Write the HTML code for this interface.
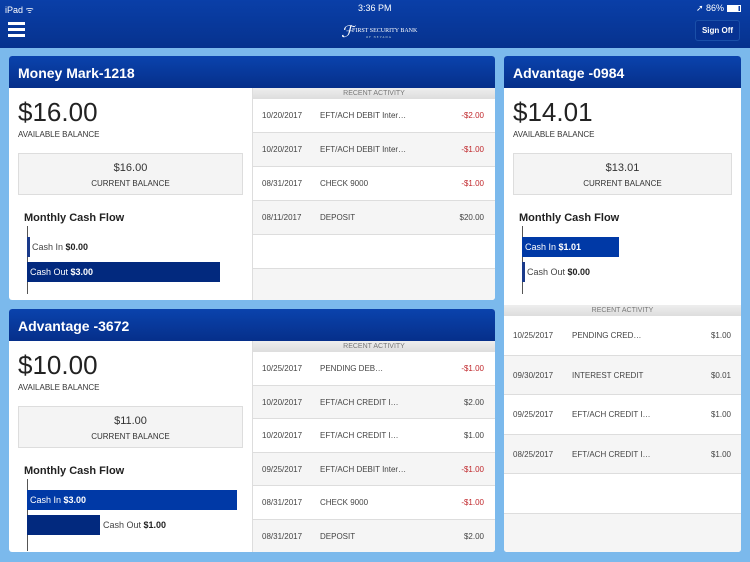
<!DOCTYPE html><html><head><style>
*{margin:0;padding:0;box-sizing:border-box}
body{width:750px;height:562px;overflow:hidden;background:#7bb9ec;font-family:"Liberation Sans",sans-serif;position:relative;color:#333}
.top{position:absolute;left:0;top:0;width:750px;height:48px;background:linear-gradient(#0a3fa8,#06328e)}
.abs{position:absolute}
.card{position:absolute;background:#fff;border-radius:3px;overflow:hidden}
.ttl{position:absolute;left:0;top:0;right:0;height:32px;background:linear-gradient(#0a43ad,#062f8a);color:#fff;font-size:14px;font-weight:bold;padding:9px 0 0 9px}
.big{position:absolute;font-size:26px;color:#222}
.lbl{position:absolute;font-size:8px;color:#333}
.cb{position:absolute;background:#f4f4f4;border:1px solid #ddd;text-align:center;font-size:11px;color:#333}
.cb div{font-size:8px;margin-top:5px}
.mcf{position:absolute;font-size:11px;font-weight:bold;color:#222}
.axis{position:absolute;width:1px;background:#555}
.bar{position:absolute;height:20px;font-size:9px;color:#fff;padding:5px 0 0 3px;white-space:nowrap}
.bar b{font-weight:bold}
.act{position:absolute;border-left:1px solid #ddd;background:#f5f5f5}
.ah{height:11px;background:linear-gradient(#eee,#ddd);font-size:7px;color:#777;text-align:center;line-height:11px}
.row{position:relative;border-bottom:1px solid #ddd;font-size:8px;color:#444}
.row:nth-child(even){background:#fff}
.row:nth-child(odd){background:#f5f5f5}
.row span{position:absolute}
.neg{color:#c0282c}
</style></head><body>
<div class="top"></div>
<div class="abs" style="left:5px;top:3px;font-size:9px;color:#fff">iPad ᯤ</div>
<div class="abs" style="left:358px;top:3px;font-size:9px;color:#fff">3:36 PM</div>
<div class="abs" style="left:696px;top:3px;font-size:9px;color:#fff">➚ 86% <span style="display:inline-block;width:14px;height:7px;border:1px solid #fff;background:linear-gradient(90deg,#fff 86%,transparent 86%);vertical-align:-1px"></span></div>
<div class="abs" style="left:8px;top:22px;width:17px;height:3px;background:#fff;box-shadow:0 6px 0 #fff,0 12px 0 #fff"></div>
<div class="abs" style="left:341px;top:22px;font-family:'Liberation Serif',serif;color:#fff;font-size:16px;font-style:italic">ℱ</div>
<div class="abs" style="left:352px;top:28px;font-family:'Liberation Serif',serif;color:#fff;font-size:6px">FIRST SECURITY BANK</div>
<div class="abs" style="left:366px;top:35px;font-family:'Liberation Serif',serif;color:#cdd;font-size:3px;letter-spacing:1px">OF NEVADA</div>
<div class="abs" style="left:695px;top:20px;width:45px;height:21px;border:1px solid #1a4fa8;border-radius:3px;background:#063292;color:#fff;font-size:8px;font-weight:bold;text-align:center;line-height:19px">Sign Off</div>

<!-- card1 -->
<div class="card" style="left:9px;top:56px;width:486px;height:244px">
<div class="ttl">Money Mark-1218</div>
<div class="big" style="left:9px;top:41px">$16.00</div>
<div class="lbl" style="left:9px;top:74px">AVAILABLE BALANCE</div>
<div class="cb" style="left:9px;top:97px;width:225px;height:42px;padding-top:8px">$16.00<div>CURRENT BALANCE</div></div>
<div class="mcf" style="left:15px;top:156px">Monthly Cash Flow</div>
<div class="axis" style="left:18px;top:170px;height:68px"></div>
<div class="bar" style="left:18px;top:181px;width:2px;background:#1a3a8a"></div>
<div class="abs" style="left:23px;top:186px;font-size:9px;color:#444">Cash In <b style="color:#222">$0.00</b></div>
<div class="bar" style="left:18px;top:206px;width:193px;background:#02297e">Cash Out <b>$3.00</b></div>
<div class="act" style="left:243px;top:32px;width:243px;height:212px">
<div class="ah">RECENT ACTIVITY</div>
<div class="row" style="height:34px"><span style="left:9px;top:12px">10/20/2017</span><span style="left:67px;top:12px">EFT/ACH DEBIT Inter…</span><span class="neg" style="right:11px;top:12px">-$2.00</span></div>
<div class="row" style="height:34px"><span style="left:9px;top:12px">10/20/2017</span><span style="left:67px;top:12px">EFT/ACH DEBIT Inter…</span><span class="neg" style="right:11px;top:12px">-$1.00</span></div>
<div class="row" style="height:34px"><span style="left:9px;top:12px">08/31/2017</span><span style="left:67px;top:12px">CHECK 9000</span><span class="neg" style="right:11px;top:12px">-$1.00</span></div>
<div class="row" style="height:34px"><span style="left:9px;top:12px">08/11/2017</span><span style="left:67px;top:12px">DEPOSIT</span><span style="right:11px;top:12px">$20.00</span></div>
<div class="row" style="height:34px"></div>
<div class="row" style="height:34px;border:0"></div>
</div></div>

<!-- card3 -->
<div class="card" style="left:9px;top:309px;width:486px;height:243px">
<div class="ttl">Advantage -3672</div>
<div class="big" style="left:9px;top:41px">$10.00</div>
<div class="lbl" style="left:9px;top:74px">AVAILABLE BALANCE</div>
<div class="cb" style="left:9px;top:97px;width:225px;height:42px;padding-top:8px">$11.00<div>CURRENT BALANCE</div></div>
<div class="mcf" style="left:15px;top:156px">Monthly Cash Flow</div>
<div class="axis" style="left:18px;top:170px;height:72px"></div>
<div class="bar" style="left:18px;top:181px;width:210px;background:#0039a6">Cash In <b>$3.00</b></div>
<div class="bar" style="left:18px;top:206px;width:73px;background:#02297e"></div>
<div class="abs" style="left:94px;top:211px;font-size:9px;color:#444">Cash Out <b style="color:#222">$1.00</b></div>
<div class="act" style="left:243px;top:32px;width:243px;height:211px">
<div class="ah">RECENT ACTIVITY</div>
<div class="row" style="height:34px"><span style="left:9px;top:12px">10/25/2017</span><span style="left:67px;top:12px">PENDING DEB…</span><span class="neg" style="right:11px;top:12px">-$1.00</span></div>
<div class="row" style="height:33px"><span style="left:9px;top:12px">10/20/2017</span><span style="left:67px;top:12px">EFT/ACH CREDIT I…</span><span style="right:11px;top:12px">$2.00</span></div>
<div class="row" style="height:34px"><span style="left:9px;top:12px">10/20/2017</span><span style="left:67px;top:12px">EFT/ACH CREDIT I…</span><span style="right:11px;top:12px">$1.00</span></div>
<div class="row" style="height:33px"><span style="left:9px;top:12px">09/25/2017</span><span style="left:67px;top:12px">EFT/ACH DEBIT Inter…</span><span class="neg" style="right:11px;top:12px">-$1.00</span></div>
<div class="row" style="height:34px"><span style="left:9px;top:12px">08/31/2017</span><span style="left:67px;top:12px">CHECK 9000</span><span class="neg" style="right:11px;top:12px">-$1.00</span></div>
<div class="row" style="height:33px;border:0"><span style="left:9px;top:12px">08/31/2017</span><span style="left:67px;top:12px">DEPOSIT</span><span style="right:11px;top:12px">$2.00</span></div>
</div></div>

<!-- card2 -->
<div class="card" style="left:504px;top:56px;width:237px;height:496px">
<div class="ttl">Advantage -0984</div>
<div class="big" style="left:9px;top:41px">$14.01</div>
<div class="lbl" style="left:9px;top:74px">AVAILABLE BALANCE</div>
<div class="cb" style="left:9px;top:97px;width:219px;height:42px;padding-top:8px">$13.01<div>CURRENT BALANCE</div></div>
<div class="mcf" style="left:15px;top:156px">Monthly Cash Flow</div>
<div class="axis" style="left:18px;top:170px;height:68px"></div>
<div class="bar" style="left:18px;top:181px;width:97px;background:#0039a6">Cash In <b>$1.01</b></div>
<div class="bar" style="left:18px;top:206px;width:2px;background:#1a3a8a"></div>
<div class="abs" style="left:23px;top:211px;font-size:9px;color:#444">Cash Out <b style="color:#222">$0.00</b></div>
<div class="act" style="left:0;top:249px;width:237px;height:247px;border:0">
<div class="ah">RECENT ACTIVITY</div>
<div class="row" style="height:40px"><span style="left:9px;top:15px">10/25/2017</span><span style="left:68px;top:15px">PENDING CRED…</span><span style="right:10px;top:15px">$1.00</span></div>
<div class="row" style="height:39px"><span style="left:9px;top:15px">09/30/2017</span><span style="left:68px;top:15px">INTEREST CREDIT</span><span style="right:10px;top:15px">$0.01</span></div>
<div class="row" style="height:40px"><span style="left:9px;top:15px">09/25/2017</span><span style="left:68px;top:15px">EFT/ACH CREDIT I…</span><span style="right:10px;top:15px">$1.00</span></div>
<div class="row" style="height:39px"><span style="left:9px;top:15px">08/25/2017</span><span style="left:68px;top:15px">EFT/ACH CREDIT I…</span><span style="right:10px;top:15px">$1.00</span></div>
<div class="row" style="height:40px"></div>
<div class="row" style="height:40px;border:0"></div>
</div></div>
</body></html>
